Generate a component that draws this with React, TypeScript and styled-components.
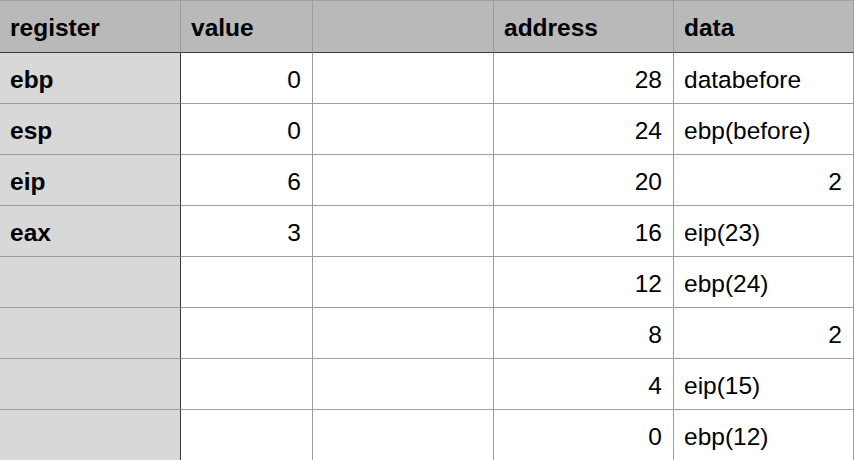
import React from 'react'
import styled, { createGlobalStyle } from 'styled-components'

const GlobalStyle = createGlobalStyle`
  html, body {
    margin: 0;
    padding: 0;
    background: #ffffff;
    overflow: hidden;
  }
  body {
    font-family: "Liberation Sans", Arial, Helvetica, sans-serif;
    color: #000000;
  }
`

const Sheet = styled.div`
  display: grid;
  grid-template-columns: 181px 132px 181px 180px 180px;
  grid-template-rows: 53px;
  grid-auto-rows: 51px;
  width: 854px;
  height: 460px;
  overflow: hidden;
`

type Kind = 'head' | 'label' | 'body'

const Cell = styled.div<{ $kind: Kind; $right?: boolean; $first?: boolean }>`
  box-sizing: border-box;
  display: flex;
  align-items: center;
  justify-content: ${props => props.$right ? 'flex-end' : 'flex-start'};
  padding: 4px ${props => props.$right ? '11px' : '10px'} 0 10px;
  font-size: 24.5px;
  font-weight: ${props => props.$kind === 'body' ? 400 : 700};
  white-space: nowrap;
  background: ${props =>
    props.$kind === 'head' ? '#b9b9b9' : props.$kind === 'label' ? '#d8d8d8' : '#ffffff'};
  border-right: 1px solid ${props => props.$first && props.$kind !== 'head' ? '#3a3a3a' : '#9c9c9c'};
  border-bottom: 1px solid ${props => props.$kind === 'head' ? '#3a3a3a' : '#9c9c9c'};
  ${props => props.$kind === 'head' && `
    border-top: 1px solid #a2a2a2;
    padding-top: 3px;
  `}
`

const headers = ['register', 'value', '', 'address', 'data']

interface Row {
  register: string
  value: string
  address: string
  data: string
  dataNumber?: boolean
}

const rows: Row[] = [
  { register: 'ebp', value: '0', address: '28', data: 'databefore' },
  { register: 'esp', value: '0', address: '24', data: 'ebp(before)' },
  { register: 'eip', value: '6', address: '20', data: '2', dataNumber: true },
  { register: 'eax', value: '3', address: '16', data: 'eip(23)' },
  { register: '', value: '', address: '12', data: 'ebp(24)' },
  { register: '', value: '', address: '8', data: '2', dataNumber: true },
  { register: '', value: '', address: '4', data: 'eip(15)' },
  { register: '', value: '', address: '0', data: 'ebp(12)' },
]

const App: React.FC = () => {
  return (
    <>
      <GlobalStyle />
      <Sheet>
        {headers.map((h, i) => (
          <Cell key={'h' + i} $kind="head" $first={i === 0}>{h}</Cell>
        ))}
        {rows.map((r, i) => (
          <React.Fragment key={i}>
            <Cell $kind="label" $first>{r.register}</Cell>
            <Cell $kind="body" $right>{r.value}</Cell>
            <Cell $kind="body" />
            <Cell $kind="body" $right>{r.address}</Cell>
            <Cell $kind="body" $right={r.dataNumber}>{r.data}</Cell>
          </React.Fragment>
        ))}
      </Sheet>
    </>
  )
}

export default App
